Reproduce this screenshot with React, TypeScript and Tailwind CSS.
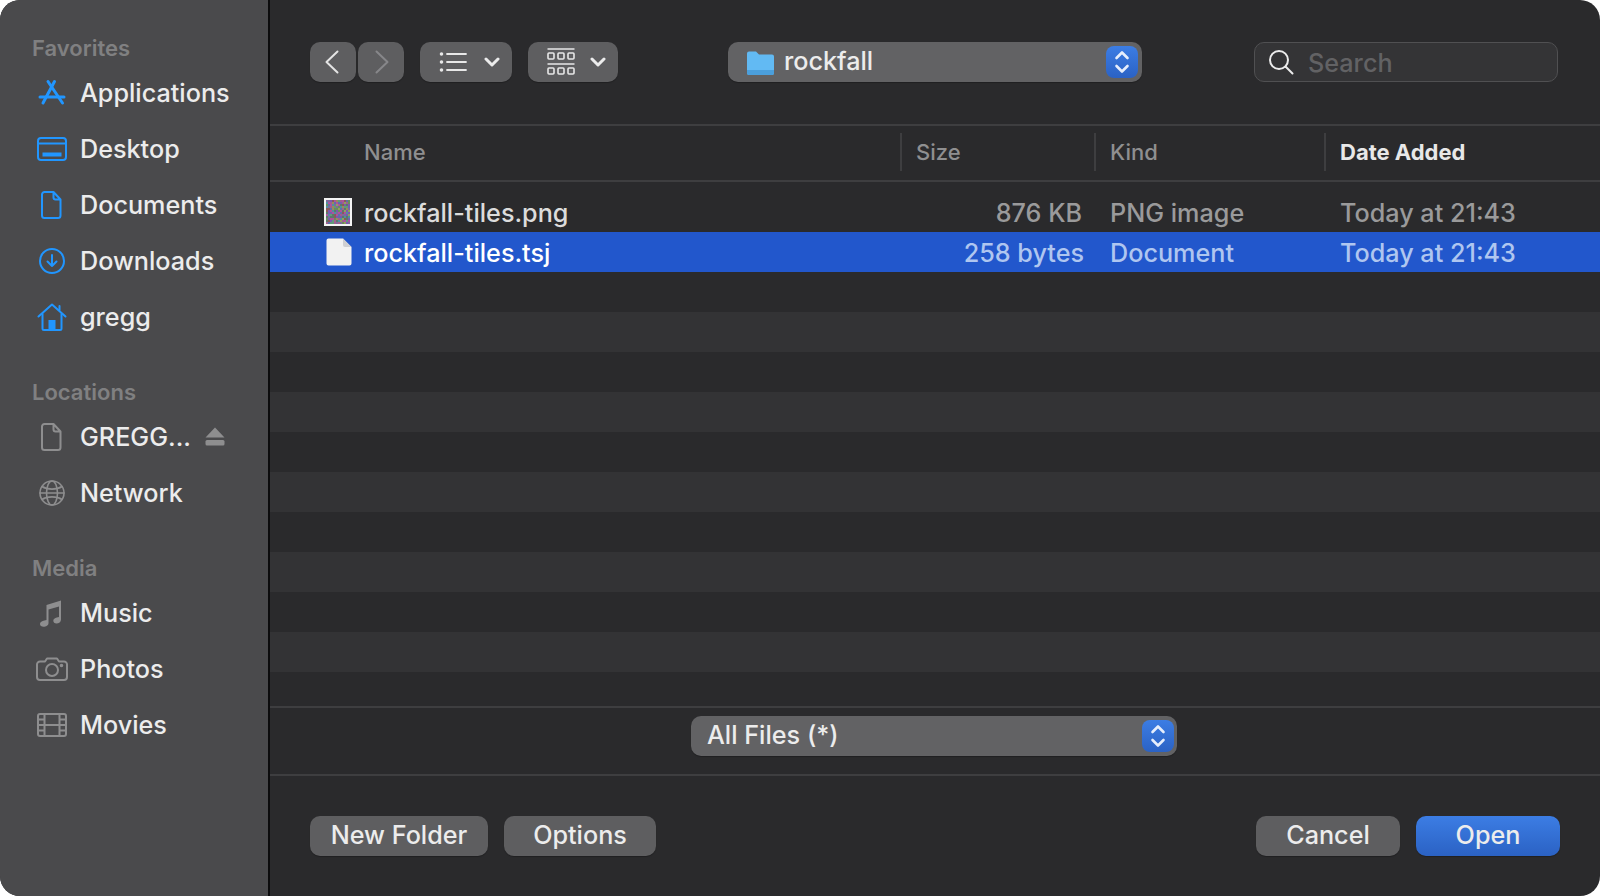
import React from "react";

const FONT = "font-['Inter','Liberation_Sans',sans-serif]";

function mulberry(seed: number) {
  return () => {
    seed |= 0;
    seed = (seed + 0x6d2b79f5) | 0;
    let t = Math.imul(seed ^ (seed >>> 15), 1 | seed);
    t = (t + Math.imul(t ^ (t >>> 7), 61 | t)) ^ t;
    return ((t ^ (t >>> 14)) >>> 0) / 4294967296;
  };
}

const NOISE_COLORS = ["#7d6a9c", "#6a8d5c", "#a05f8e", "#5f6fa8", "#9a8a5a", "#5f9a7a", "#b0509e", "#5a7a6a", "#8a5a5a", "#4f8f9f", "#8f9f5f", "#7a5ab0"];

function NoiseThumb() {
  const r = mulberry(7);
  const cells: React.ReactElement[] = [];
  for (let y = 0; y < 12; y++) {
    for (let x = 0; x < 12; x++) {
      cells.push(<rect key={`${x}-${y}`} x={x * 2} y={y * 2} width={2} height={2} fill={NOISE_COLORS[Math.floor(r() * NOISE_COLORS.length)]} />);
    }
  }
  return (
    <svg width="28" height="28" viewBox="0 0 28 28" className="shrink-0">
      <rect width="28" height="28" fill="#f4f4f4" />
      <g transform="translate(2 2)">{cells}</g>
    </svg>
  );
}

const DocPath = "M4.5 1H13.5L20.5 8.5V24.5A2.5 2.5 0 0 1 18 27H4.5A2.5 2.5 0 0 1 2 24.5V3.5A2.5 2.5 0 0 1 4.5 1ZM13.5 1V6.5A2 2 0 0 0 15.5 8.5H20.5";

function Icon({ name, color }: { name: string; color: string }) {
  const common = { fill: "none", stroke: color, strokeWidth: 2, strokeLinecap: "round" as const, strokeLinejoin: "round" as const };
  switch (name) {
    case "apps":
      return (
        <svg width="30" height="28" viewBox="0 0 30 28" {...common} strokeWidth={3}>
          <path d="M17.5 2.5L6 24" />
          <path d="M11 2.5L25.5 24" />
          <path d="M3 18H27" />
        </svg>
      );
    case "desktop":
      return (
        <svg width="30" height="24" viewBox="0 0 30 24" {...common}>
          <rect x="1" y="1" width="28" height="22" rx="3" />
          <path d="M1 6.5H29" />
          <rect x="5.5" y="15.5" width="19" height="4" fill={color} stroke="none" />
        </svg>
      );
    case "doc":
      return (
        <svg width="22" height="28" viewBox="0 0 22 28" {...common} className="-translate-x-[1px]">
          <path d={DocPath} />
        </svg>
      );
    case "download":
      return (
        <svg width="26" height="26" viewBox="0 0 26 26" {...common}>
          <circle cx="13" cy="13" r="12" />
          <path d="M13 7V18M8.5 13.5L13 18L17.5 13.5" />
        </svg>
      );
    case "home":
      return (
        <svg width="30" height="28" viewBox="0 0 30 28" {...common}>
          <path d="M1.5 13.5L15 1.5L28.5 13.5" />
          <path d="M22.5 7V3" />
          <path d="M5.5 11V25.5A1.5 1.5 0 0 0 7 27H23A1.5 1.5 0 0 0 24.5 25.5V11" />
          <rect x="11.5" y="17" width="7" height="10" fill={color} stroke="none" />
        </svg>
      );
    case "globe":
      return (
        <svg width="26" height="26" viewBox="0 0 26 26" {...common} strokeWidth={1.6}>
          <circle cx="13" cy="13" r="12" />
          <ellipse cx="13" cy="13" rx="5.5" ry="12" />
          <path d="M3 6.5C8 10 18 10 23 6.5M1 13H25M3 19.5C8 16 18 16 23 19.5" />
        </svg>
      );
    case "music":
      return (
        <svg width="26" height="28" viewBox="0 0 26 28" fill={color}>
          <path transform="translate(-2 0)" d="M9.5 6L24 1.5V20.5C24 23 21.8 24.5 19.5 24.5C17.5 24.5 16.3 23.4 16.3 21.8C16.3 20 17.8 19 19.8 18.5L22 18V7.5L11.5 10.5V24C11.5 26.5 9 27.8 6.5 27.8C4.5 27.8 3 26.8 3 25C3 23.2 4.5 22.2 6.5 21.7L9.5 21Z" />
        </svg>
      );
    case "camera":
      return (
        <svg width="32" height="24" viewBox="0 0 32 24" {...common}>
          <path d="M4 4.5H9L11 1.5H21L23 4.5H28A3 3 0 0 1 31 7.5V20A3 3 0 0 1 28 23H4A3 3 0 0 1 1 20V7.5A3 3 0 0 1 4 4.5Z" />
          <circle cx="16" cy="13" r="6" />
          <circle cx="25.5" cy="8.5" r="0.8" fill={color} />
        </svg>
      );
    case "film":
      return (
        <svg width="30" height="24" viewBox="0 0 30 24" {...common}>
          <rect x="1" y="1" width="28" height="22" rx="2" />
          <path d="M7.5 1V23M22.5 1V23M7.5 12H22.5M1 6.5H7.5M1 12H7.5M1 17.5H7.5M22.5 6.5H29M22.5 12H29M22.5 17.5H29" />
        </svg>
      );
    default:
      return null;
  }
}

const BLUE = "#2196ff";
const GRAY = "#8e8e8f";

function SideHead({ children, className = "" }: { children: React.ReactNode; className?: string }) {
  return <div className={`h-[32px] pl-[32px] text-[22px] leading-[30px] font-semibold text-[#808081] ${className}`}>{children}</div>;
}

function SideItem({ icon, label, color, eject }: { icon: string; label: string; color: string; eject?: boolean }) {
  return (
    <div className="flex h-[56px] items-center text-[25.2px] font-[450] text-[#ececec]">
      <div className="flex w-[80px] shrink-0 justify-center pl-[23px]">
        <Icon name={icon} color={color} />
      </div>
      <span className="pt-[2px]">{label}</span>
      {eject && (
        <svg width="20" height="19" viewBox="0 0 20 19" fill={color} className="ml-[14px] -mt-[2px]">
          <path d="M10 0.5L19.5 10.5H0.5Z" />
          <rect x="0.5" y="13" width="19" height="5.5" rx="1.5" />
        </svg>
      )}
    </div>
  );
}

function Chevron({ className }: { className: string }) {
  return (
    <svg width="16" height="10" viewBox="0 0 16 10" fill="none" stroke="#ececec" strokeWidth="3" strokeLinecap="round" strokeLinejoin="round" className={className}>
      <path d="M2 2L8 8L14 2" />
    </svg>
  );
}

const BTN = "h-[40px] rounded-[10px] bg-[#5e5e60] pb-[1px] shadow-[0_1px_1px_rgba(0,0,0,0.25)] flex items-center justify-center";

function Stepper() {
  return (
    <div className="flex h-[32px] w-[32px] items-center justify-center rounded-[8px] bg-gradient-to-b from-[#3c7de4] to-[#2b62c4]">
      <svg width="16" height="24" viewBox="0 0 16 24" fill="none" stroke="#e6eefc" strokeWidth="2.6" strokeLinecap="round" strokeLinejoin="round">
        <path d="M2.5 8L8 2.5L13.5 8M2.5 16L8 21.5L13.5 16" />
      </svg>
    </div>
  );
}

function Header({ className, children, sep, bold }: { className: string; children: React.ReactNode; sep?: boolean; bold?: boolean }) {
  return (
    <div className={`${className} flex h-[38px] items-center ${sep ? "border-l-2 border-[#3e3e40] pl-[14px]" : ""} ${bold ? "font-bold text-[#e8e8e8]" : "font-medium text-[#8f8f90]"}`}>
      {children}
    </div>
  );
}

function Stripe({ light }: { light?: boolean }) {
  return <div className={`h-[40px] ${light ? "bg-[#333335]" : ""}`} />;
}

export default function App() {
  return (
    <div className={`h-[896px] w-[1600px] overflow-hidden bg-white ${FONT}`}>
      <div className="flex h-full w-full overflow-hidden rounded-[20px] bg-[#2a2a2c]">
        <aside className="h-full w-[270px] shrink-0 border-r-2 border-[#0c0c0d] bg-[#4a4a4c] pt-[33px]">
          <SideHead>Favorites</SideHead>
          <SideItem icon="apps" label="Applications" color={BLUE} />
          <SideItem icon="desktop" label="Desktop" color={BLUE} />
          <SideItem icon="doc" label="Documents" color={BLUE} />
          <SideItem icon="download" label="Downloads" color={BLUE} />
          <SideItem icon="home" label="gregg" color={BLUE} />
          <SideHead className="mt-[32px]">Locations</SideHead>
          <SideItem icon="doc" label="GREGG..." color={GRAY} eject />
          <SideItem icon="globe" label="Network" color={GRAY} />
          <SideHead className="mt-[32px]">Media</SideHead>
          <SideItem icon="music" label="Music" color={GRAY} />
          <SideItem icon="camera" label="Photos" color={GRAY} />
          <SideItem icon="film" label="Movies" color={GRAY} />
        </aside>

        <main className="flex h-full min-w-0 flex-1 flex-col">
          <div className="flex h-[126px] shrink-0 items-start border-b-2 border-[#3e3e40] pl-[40px] pt-[42px]">
            <div className={`${BTN} w-[46px]`}>
              <svg width="14" height="24" viewBox="0 0 14 24" fill="none" stroke="#e4e4e4" strokeWidth="2" strokeLinecap="round" strokeLinejoin="round" className="-ml-[3px]">
                <path d="M12.5 1.5L1.5 12L12.5 22.5" />
              </svg>
            </div>
            <div className={`${BTN} ml-[2px] w-[46px]`}>
              <svg width="14" height="24" viewBox="0 0 14 24" fill="none" stroke="#87878a" strokeWidth="2" strokeLinecap="round" strokeLinejoin="round" className="ml-[2px]">
                <path d="M1.5 1.5L12.5 12L1.5 22.5" />
              </svg>
            </div>
            <div className={`${BTN} ml-[16px] w-[92px]`}>
              <svg width="28" height="20" viewBox="0 0 28 20" fill="#e8e8e8" stroke="#e8e8e8" strokeWidth="1.8" strokeLinecap="round" className="ml-[6px]">
                <circle cx="2.5" cy="2" r="0.9" />
                <circle cx="2.5" cy="10" r="0.9" />
                <circle cx="2.5" cy="18" r="0.9" />
                <path d="M8 2H27M8 10H27M8 18H27" />
              </svg>
              <Chevron className="ml-[17px]" />
            </div>
            <div className={`${BTN} ml-[16px] w-[90px]`}>
              <svg width="28" height="28" viewBox="0 0 28 28" fill="none" stroke="#e8e8e8" strokeWidth="1.6" className="ml-[7px]">
                <path d="M0.5 1H27.5M0.5 16H27.5" />
                <rect x="1" y="5" width="6" height="6" rx="1" />
                <rect x="11" y="5" width="6" height="6" rx="1" />
                <rect x="21" y="5" width="6" height="6" rx="1" />
                <rect x="1" y="20" width="6" height="6" rx="1" />
                <rect x="11" y="20" width="6" height="6" rx="1" />
                <rect x="21" y="20" width="6" height="6" rx="1" />
              </svg>
              <Chevron className="ml-[15px]" />
            </div>
            <div className="ml-[110px] flex h-[40px] w-[414px] items-center rounded-[10px] bg-[#626264] pl-[18px] pr-[4px] shadow-[0_1px_1px_rgba(0,0,0,0.25)]">
              <svg width="28" height="28" viewBox="0 0 28 28" className="shrink-0">
                <path d="M1 5.5A2 2 0 0 1 3 3.5H10L13 6.5H26A2 2 0 0 1 28 8.5V25A2 2 0 0 1 26 27H3A2 2 0 0 1 1 25Z" fill="#62baf3" />
                <path d="M1 22H28V25A2 2 0 0 1 26 27H3A2 2 0 0 1 1 25Z" fill="#4b9fdc" />
              </svg>
              <span className="ml-[10px] flex-1 text-[25.2px] font-[450] text-[#ececec]">rockfall</span>
              <Stepper />
            </div>
            <div className="ml-[112px] flex h-[40px] w-[304px] items-center rounded-[10px] border border-[#505052] bg-[#343436] pl-[13px]">
              <svg width="26" height="26" viewBox="0 0 26 26" fill="none" stroke="#ececec" strokeWidth="2" strokeLinecap="round" className="shrink-0">
                <circle cx="11" cy="11" r="9" />
                <path d="M17.5 17.5L24.5 24.5" />
              </svg>
              <span className="ml-[14px] pt-[4px] text-[25.2px] font-[450] text-[#626264]">Search</span>
            </div>
          </div>

          <div className="flex h-[56px] shrink-0 items-center border-b-2 border-[#3e3e40] pb-[2px] text-[22px]">
            <Header className="w-[630px] pl-[94px]">Name</Header>
            <Header className="w-[194px]" sep>Size</Header>
            <Header className="w-[230px]" sep>Kind</Header>
            <Header className="flex-1" sep bold>Date Added</Header>
          </div>

          <div className="flex-1 overflow-hidden pt-[10px] text-[25.2px] font-[450]">
            <div className="flex h-[40px] items-center pt-[4px] text-[#9a9a9b]">
              <div className="-mt-[4px] flex w-[94px] shrink-0 justify-end pr-[12px]">
                <NoiseThumb />
              </div>
              <span className="w-[442px] text-[#dcdcdc]">rockfall-tiles.png</span>
              <span className="w-[276px] text-right">876 KB</span>
              <span className="ml-[28px] w-[230px]">PNG image</span>
              <span>Today at 21:43</span>
            </div>
            <div className="flex h-[40px] items-center bg-[#2257cc] pt-[4px] text-[#afc6f0]">
              <div className="-mt-[4px] flex w-[94px] shrink-0 justify-end pr-[12px]">
                <svg width="26" height="28" viewBox="0 0 26 28">
                  <path d="M2.5 0.5H17L25.5 9V25.5A2 2 0 0 1 23.5 27.5H2.5A2 2 0 0 1 0.5 25.5V2.5A2 2 0 0 1 2.5 0.5Z" fill="#f2f2f2" />
                  <path d="M17 0.5V7A2 2 0 0 0 19 9H25.5Z" fill="#cfcfd2" />
                </svg>
              </div>
              <span className="w-[442px] text-white">rockfall-tiles.tsj</span>
              <span className="w-[278px] text-right">258 bytes</span>
              <span className="ml-[26px] w-[230px]">Document</span>
              <span>Today at 21:43</span>
            </div>
            <Stripe />
            <Stripe light />
            <Stripe />
            <Stripe light />
            <Stripe />
            <Stripe light />
            <Stripe />
            <Stripe light />
            <Stripe />
            <Stripe light />
          </div>

          <div className="flex h-[70px] shrink-0 items-start justify-center border-y-2 border-[#3e3e40] pr-[2px] pt-[8px]">
            <div className="flex h-[40px] w-[486px] items-center rounded-[10px] bg-[#626264] pl-[16px] pr-[3px] shadow-[0_1px_1px_rgba(0,0,0,0.25)]">
              <span className="flex-1 text-[25.2px] font-[450] text-[#ececec]">All Files (*)</span>
              <Stepper />
            </div>
          </div>

          <div className="flex h-[120px] shrink-0 items-start px-[40px] pt-[40px] text-[25.2px] font-[450] text-[#ececec]">
            <div className={`${BTN} w-[178px]`}>New Folder</div>
            <div className={`${BTN} ml-[16px] w-[152px]`}>Options</div>
            <div className={`${BTN} ml-auto w-[144px]`}>Cancel</div>
            <div className={`${BTN} ml-[16px] w-[144px] !bg-transparent bg-gradient-to-b from-[#3c7de4] to-[#2b62c4]`}>Open</div>
          </div>
        </main>
      </div>
    </div>
  );
}
